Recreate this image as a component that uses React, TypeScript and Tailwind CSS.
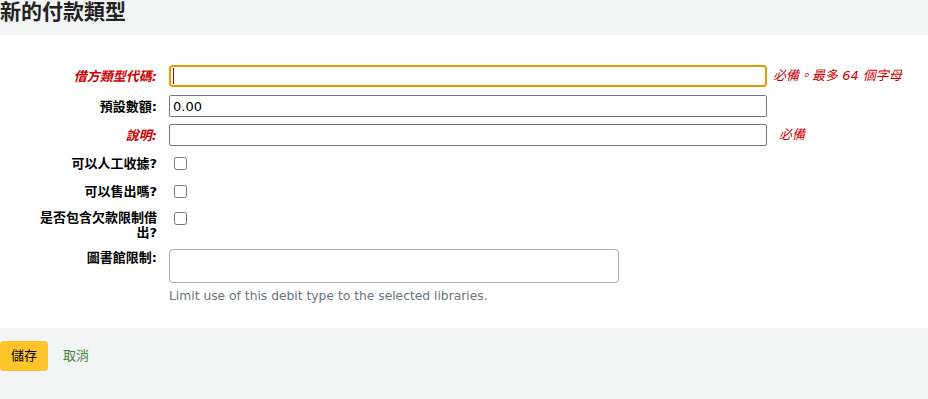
import { useState } from 'react';

const font = { fontFamily: '"DejaVu Sans", "Noto Sans CJK TC", sans-serif' };

function Label({ text, required, top }: { text: string; required?: boolean; top?: boolean }) {
  return (
    <label
      className={
        'ml-[33px] w-[124px] shrink-0 text-right text-[13px] leading-[15px] font-bold ' +
        (required ? 'italic text-[#cc0000] ' : 'text-black ') +
        (top ? 'mt-[1px]' : '')
      }
    >
      {text}
    </label>
  );
}

export default function App() {
  const [code, setCode] = useState('');
  const [amount, setAmount] = useState('0.00');
  const [desc, setDesc] = useState('');

  return (
    <div className="w-[928px] h-[399px] bg-[#f3f4f4] text-[13px] text-black" style={font}>
      {/* Page heading */}
      <div className="h-[35px] flex items-start">
        <h1 className="text-[21px] font-bold leading-[24px] text-[#222]">新的付款類型</h1>
      </div>

      {/* Form */}
      <div className="bg-white pt-[30px] pb-[25px]">
        <div className="flex items-center h-[22px]">
          <Label text="借方類型代碼:" required />
          <div className="relative ml-[12px] w-[598px] h-[22px] rounded-[4px] border-2 border-[#e69b00]">
            <input
              value={code}
              onChange={(e) => setCode(e.target.value)}
              className="w-full h-full px-[2px] text-[13px] outline-none bg-transparent"
            />
            <span className="absolute left-[2px] top-[1px] w-px h-[16px] bg-[#a00000]" />
          </div>
          <span className="ml-[6px] text-[13px] italic text-[#cc0000]">必備。最多 64 個字母</span>
        </div>

        <div className="flex items-center h-[22px] mt-[8px]">
          <Label text="預設數額:" />
          <input
            value={amount}
            onChange={(e) => setAmount(e.target.value)}
            className="ml-[12px] w-[598px] h-[22px] px-[3px] border border-[#767676] rounded-[2px] text-[13px] outline-none"
          />
        </div>

        <div className="flex items-center h-[22px] mt-[7px]">
          <Label text="說明:" required />
          <input
            value={desc}
            onChange={(e) => setDesc(e.target.value)}
            className="ml-[12px] w-[598px] h-[22px] px-[3px] border border-[#767676] rounded-[2px] text-[13px] outline-none"
          />
          <span className="ml-[12px] text-[13px] italic text-[#cc0000]">必備</span>
        </div>

        <div className="flex items-center h-[16px] mt-[9px]">
          <Label text="可以人工收據?" />
          <input type="checkbox" className="ml-[17px] w-[13px] h-[13px]" />
        </div>

        <div className="flex items-center h-[16px] mt-[12px]">
          <Label text="可以售出嗎?" />
          <input type="checkbox" className="ml-[17px] w-[13px] h-[13px]" />
        </div>

        <div className="flex items-start mt-[11px]">
          <Label text="是否包含欠款限制借出?" />
          <input type="checkbox" className="ml-[17px] mt-[2px] w-[13px] h-[13px]" />
        </div>

        <div className="flex items-start mt-[9px]">
          <Label text="圖書館限制:" top />
          <div className="ml-[12px] w-[450px] h-[34px] rounded-[4px] border border-[#aaa] bg-white" />
        </div>

        <div className="ml-[169px] mt-[6px] text-[12.3px] leading-[14px] text-[#6c757d]">
          Limit use of this debit type to the selected libraries.
        </div>
      </div>

      {/* Actions */}
      <div className="flex items-center pt-[13px]">
        <button className="h-[30px] px-[11px] rounded-[4px] bg-[#ffc32b] text-[13px] text-black">儲存</button>
        <a href="#" className="ml-[15px] text-[13px] text-[#408540]">取消</a>
      </div>
    </div>
  );
}
